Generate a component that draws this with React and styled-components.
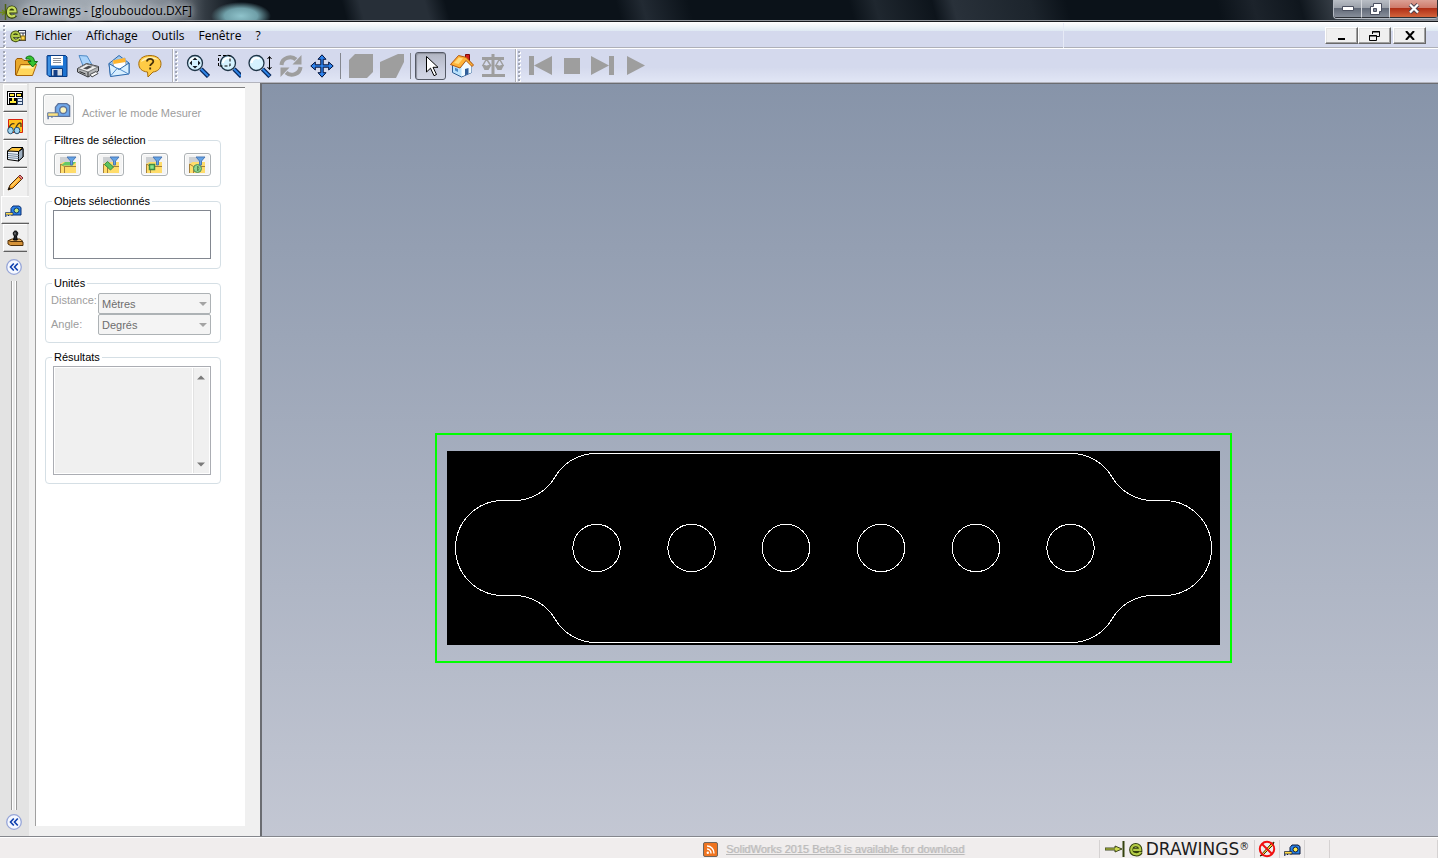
import React from "react";
import styled, { createGlobalStyle, css } from "styled-components";

const GlobalStyle = createGlobalStyle`
  * {
    box-sizing: border-box;
  }

  html,
  body,
  #root {
    height: 100%;
    margin: 0;
  }

  body {
    overflow: hidden;
  }

  button,
  select,
  textarea {
    font: inherit;
    color: inherit;
    margin: 0;
    padding: 0;
    border: none;
    background: none;
  }
`;

const Window = styled.div`
  height: 100vh;
  display: flex;
  flex-direction: column;
  background: #f0f0f0;
  font-family: "Open Sans", sans-serif;
  font-size: 12px;
  color: #000;
`;

/* ---------- title bar ---------- */

const TitleBar = styled.header`
  flex: none;
  height: 22px;
  display: flex;
  align-items: flex-start;
  justify-content: space-between;
  border-bottom: 1px solid #15181c;
  box-shadow: inset 0 -1px 0 #8e9298;
  background:
    radial-gradient(ellipse 30px 14px at 241px 16px, #8fc3cb 0%, #6f9fa8 55%, transparent 100%),
    linear-gradient(90deg, #737c84 0, #9ba3ac 40px, #a3abb4 110px, #7d858e 170px, #333b43 205px, transparent 240px),
    linear-gradient(
      75deg,
      #0b1219 0,
      #0b1219 335px,
      #272f38 352px,
      #272f38 415px,
      #0b1219 435px,
      #0b1219 600px,
      #222a33 625px,
      #0b1219 670px,
      #0b1219 825px,
      #1f272f 850px,
      #0d141b 905px,
      #29313a 925px,
      #1c242c 1000px,
      #0b1219 1035px,
      #0b1219 1180px,
      #1c232b 1215px,
      #0f161d 1260px,
      #4a525b 1310px,
      #7b848e 1335px,
      #7b848e 100%
    );
`;

const TitleText = styled.h1`
  display: flex;
  align-items: center;
  gap: 4px;
  height: 21px;
  margin: 0;
  font-size: 12px;
  line-height: 20px;
  font-weight: 400;
  text-shadow: 0 0 6px #e4e8ec, 0 0 8px #cfd5da;
`;

const CaptionButtons = styled.div`
  display: flex;
  height: 19px;
  border: 1px solid #b5bac2;
  border-top: none;
  border-right: none;
  border-radius: 0 0 4px 4px;
  overflow: hidden;
`;

const CaptionButton = styled.button`
  width: ${(p) => (p.$close ? 48 : 28)}px;
  height: 18px;
  display: flex;
  justify-content: center;
  align-items: center;
  border-right: 1px solid ${(p) => (p.$close ? "#2b2f35" : "#d4d7dc")};
  border-bottom: 1px solid #2b2f35;
  background: ${(p) =>
    p.$close
      ? "linear-gradient(#dca095 0, #cf7b6c 45%, #b02f17 50%, #d2643c 100%)"
      : "linear-gradient(#b9bec5 0, #9ba1aa 45%, #626a78 50%, #878e9a 100%)"};
`;

/* ---------- menu ---------- */

const MenuBar = styled.nav`
  flex: none;
  height: 27px;
  display: flex;
  align-items: center;
  padding: 1px 12px 0 2px;
  border-bottom: 1px solid #fff;
  box-shadow: inset 0 -1px 0 #aeb0b8;
  background: linear-gradient(#ffffff 0, #dfe9f3 9px, #d4d9ed 9px);
`;

const Grip = styled.span`
  width: 8px;
  height: ${(p) => p.$height}px;
  flex: none;
  background:
    radial-gradient(circle at 2px 2px, #a2a7b5 1px, transparent 1px) 0 0 / 8px 4px,
    radial-gradient(circle at 3px 3px, #fff 1px, transparent 1px) 0 0 / 8px 4px;
`;

const MenuItem = styled.button`
  padding: 0 7px;
  height: 22px;
  line-height: 20px;
`;

const MenuEnd = styled.span`
  width: 1px;
  height: 25px;
  margin-right: 261px;
  margin-left: auto;
  background: #e6eaf6;
`;

const MdiButton = styled.button`
  width: 33px;
  height: 17px;
  margin-left: ${(p) => (p.$spaced ? 2 : 0)}px;
  display: flex;
  align-items: center;
  justify-content: center;
  background: #f0f0f0;
  border: 1px solid #fff;
  border-right-color: #696969;
  border-bottom-color: #696969;
  box-shadow: inset -1px -1px 0 #a0a0a0, inset 1px 1px 0 #e3e3e3;
`;

/* ---------- toolbar ---------- */

const Toolbar = styled.div`
  flex: none;
  height: 34px;
  display: flex;
  padding-left: 2px;
  border-bottom: 1px solid #b3b4bd;
  background: linear-gradient(#d4d9ed 0, #d4d9ed 55%, #e1e6f5 100%);
`;

const ToolGroup = styled.div`
  display: flex;
  align-items: center;
  padding-right: 8px;
  ${(p) =>
    !p.$last &&
    css`
      border-right: 1px solid #fff;
      box-shadow: inset -1px 0 0 #aeb0b8;
    `}
`;

const ToolButton = styled.button`
  width: 31px;
  height: 28px;
  display: flex;
  align-items: center;
  justify-content: center;
  ${(p) =>
    p.$pressed &&
    css`
      border: 1px solid #555a66;
      border-radius: 3px;
      background: linear-gradient(#b1b5c2, #c9cddd 60%, #d3d7e6);
      box-shadow: inset 1px 1px 1px #8c909c;
    `}
`;

const Separator = styled.span`
  width: 1px;
  height: 26px;
  margin: 0 4px 0 3px;
  background: #84878f;
`;

/* ---------- body ---------- */

const Body = styled.div`
  flex: 1;
  min-height: 0;
  display: flex;
`;

const Rail = styled.div`
  flex: none;
  width: 29px;
  display: flex;
  flex-direction: column;
  padding: 1px 0 6px;
  background: #e3e3e3;
`;

const RailTab = styled.button`
  height: 28px;
  flex: none;
  margin-left: ${(p) => (p.$active ? 1 : 3)}px;
  margin-right: ${(p) => (p.$active ? 0 : 2)}px;
  padding-right: ${(p) => (p.$active ? 5 : 1)}px;
  display: flex;
  align-items: center;
  justify-content: center;
  background: #f0f0f0;
  border-left: 1px solid #fff;
  border-top: 1px solid #fff;
  border-bottom: 1px solid ${(p) => (p.$noLine ? "#f0f0f0" : "#5f5f5f")};
  box-shadow: inset 0 -1px 0 ${(p) => (p.$noLine ? "#f0f0f0" : "#c4c4c4")};
`;

const Collapse = styled.button`
  flex: none;
  width: 16px;
  height: 16px;
  margin: ${(p) => (p.$bottom ? 4 : 7)}px 0 0 6px;
  display: flex;
`;

const RailBars = styled.div`
  flex: 1;
  width: 6px;
  margin: 6px 0 0 11px;
  border: solid #9a9a9a;
  border-width: 0 1px;
  background: linear-gradient(90deg, #fff 1px, #e8e8e8 1px, #e8e8e8 3px, #fff 3px);
`;

const SidePanel = styled.aside`
  flex: none;
  width: 231px;
  padding: 4px 15px 10px 6px;
  background: #f0f0f0;
`;

const Sheet = styled.div`
  height: 100%;
  padding: 6px 24px 0 7px;
  background: #fff;
  border-left: 1px solid #a0a0a0;
  border-top: 1px solid #808080;
  font-family: "Liberation Sans", sans-serif;
  font-size: 11px;
`;

const MeasureRow = styled.label`
  display: flex;
  align-items: center;
  gap: 8px;
  height: 31px;
  margin-bottom: 8px;
  color: #9d9d9d;
  line-height: 14px;
  white-space: nowrap;

  span {
    padding-top: 7px;
  }
`;

const PushButton = styled.button`
  width: ${(p) => (p.$large ? 31 : 27)}px;
  height: ${(p) => (p.$large ? 31 : 23)}px;
  flex: none;
  display: flex;
  align-items: center;
  justify-content: center;
  border: 1px solid #adb2b5;
  border-radius: 3px;
  background: #f4f4f4;
  box-shadow: inset 0 0 0 1px #fcfcfc;
`;

const Group = styled.fieldset`
  min-width: 0;
  margin: 0 0 7px 2px;
  padding: ${(p) => p.$top}px 9px ${(p) => p.$bottom}px 7px;
  border: 1px solid #d5dfe5;
  border-radius: 4px;

  legend {
    margin-left: -1px;
    padding: 0 2px;
    height: 14px;
    line-height: 14px;
  }
`;

const FilterRow = styled.div`
  display: flex;
  justify-content: space-between;
  padding-left: 1px;
`;

const ObjectList = styled.textarea`
  display: block;
  width: 100%;
  height: 49px;
  resize: none;
  border: 1px solid #828790;
  background: #fff;
`;

const UnitRow = styled.div`
  display: flex;
  height: 21px;
  margin-left: -2px;

  label {
    width: 47px;
    line-height: 14px;
    padding-top: ${(p) => (p.$low ? 3 : 0)}px;
    color: #9d9d9d;
  }
`;

const SelectBox = styled.div`
  flex: 1;
  position: relative;

  select {
    width: 100%;
    height: 21px;
    padding-left: 3px;
    appearance: none;
    border: 1px solid #adb2b5;
    border-radius: 2px;
    background: #f4f4f4;
    color: #6d6d6d;
    opacity: 1;
  }

  svg {
    position: absolute;
    right: 4px;
    top: 9px;
    pointer-events: none;
  }
`;

const ResultBox = styled.div`
  display: flex;
  height: 109px;
  padding: 1px;
  border: 1px solid #abadb3;
  background: #fff;

  textarea {
    flex: 1;
    min-width: 0;
    resize: none;
    background: #f0f0f0;
  }
`;

const ScrollTrack = styled.div`
  width: 17px;
  padding: 7px 0 6px;
  display: flex;
  flex-direction: column;
  align-items: center;
  justify-content: space-between;
  background: #f0f0f0;
  border-left: 1px solid #fff;
  box-shadow: inset 1px 0 0 #e2e2e2;
`;

const Viewport = styled.main`
  flex: 1;
  min-width: 0;
  position: relative;
  overflow: hidden;
  border-left: 2px solid #6b6d72;
  border-top: 1px solid #6b6d72;
  background: linear-gradient(#8794a9, #c3c7d3);
`;

/* the model floats on the free canvas */
const Model = styled.svg`
  position: absolute;
  left: 173px;
  top: 349px;
`;

/* ---------- status bar ---------- */

const StatusBar = styled.footer`
  flex: none;
  height: 22px;
  display: flex;
  justify-content: flex-end;
  border-top: 1px solid #85878d;
  box-shadow: inset 0 1px 0 #fff;
  background: #f0eded;
`;

const StatusCell = styled.div`
  width: ${(p) => p.$width}px;
  margin-top: 3px;
  display: flex;
  align-items: center;
  justify-content: ${(p) => (p.$start ? "flex-start" : "center")};
  gap: ${(p) => (p.$start ? 8 : 3)}px;
  border-right: 1px solid #d5d2d2;
  font-family: "Liberation Sans", sans-serif;
  font-size: 11px;
`;

const NewsLink = styled.a`
  color: #b9b9b9;
  text-shadow: 1px 0 0 #d6d3d3;
  white-space: nowrap;
`;

const WordMark = styled.span`
  display: flex;
  font-family: "DejaVu Sans", sans-serif;
  font-size: 17px;
  line-height: 18px;
  color: #1c1c1c;

  sup {
    font-size: 10px;
    line-height: 14px;
  }
`;

/* ---------- icons ---------- */

const EMark = ({ size = 15 }) => (
  <svg width={size} height={size} viewBox="0 0 16 16" aria-hidden="true">
    <path
      d="M13.5 10.5C12 14 4 14.500 3.500 8.300 3.500 1.800 13 1.800 13 8.300H5.500"
      fill="none"
      stroke="#33400a"
      strokeWidth="4.600"
    />
    <path
      d="M13.500 10.500C12 14 4 14.500 3.500 8.300 3.500 1.800 13 1.800 13 8.300H5.500"
      fill="none"
      stroke="#b4cc48"
      strokeWidth="2.400"
    />
  </svg>
);

const AppIcon = () => (
  <svg width="18" height="20" viewBox="0 0 18 20" aria-hidden="true">
    <path d="M0 11.500H4M2 9l3 2.500-3 2.500" fill="none" stroke="#6f8a1b" strokeWidth="1.500" />
    <path d="M5.500 3v16" stroke="#4d6110" strokeWidth="1.500" />
    <path d="M15.500 14C13.500 16.500 8 16.500 8 11 8 5 15.500 5 15.500 10.500H9" fill="none" stroke="#2f3b08" strokeWidth="4" />
    <path d="M15 14C13.500 16 8 16.500 8 11 8 5 15.500 5 15.500 10.500H9" fill="none" stroke="#c6dc5c" strokeWidth="2.200" />
  </svg>
);

const DocIcon = () => (
  <svg width="18" height="14" viewBox="0 0 18 14" aria-hidden="true">
    <rect x="8.500" y="1.500" width="7" height="10" fill="#fff" stroke="#30364a" />
    <path d="M10 4h3v3M13 4h3" stroke="#30364a" fill="none" />
    <rect x="11" y="7" width="4" height="4" fill="#ffd94a" stroke="#8c6c10" />
    <path d="M9 9.500C7.500 12.500 2 12 2 7.200 2 2 9 2 9 7H3" fill="none" stroke="#37450d" strokeWidth="3.600" />
    <path d="M9 9.500C7.500 12.500 2 12 2 7.200 2 2 9 2 9 7H3" fill="none" stroke="#b4cc48" strokeWidth="1.800" />
  </svg>
);

const Tool = ({ children }) => (
  <svg width="24" height="24" viewBox="0 0 24 24" aria-hidden="true">
    {children}
  </svg>
);

const OpenIcon = () => (
  <Tool>
    <path d="M1.500 21V6.500L3 4.500h5l2 2h8.500V12" fill="#e9a92c" stroke="#9a5a08" />
    <path d="M2 21.500L6.500 10.500H22.500L18.500 21.500z" fill="#ffd65c" stroke="#a8660c" />
    <path d="M7.500 12H20l-1 2.500H6.500z" fill="#fff0a8" />
    <path d="M12 3.500C15.500.500 20 2 20.500 7.500H23.500L18.700 13 14 7.500h3C16.500 5.500 15 4.500 12 5z" fill="#35c431" stroke="#0d6d14" />
  </Tool>
);

const SaveIcon = () => (
  <Tool>
    <path d="M2.500 1.500h18l1.500 1.500v19.500h-18L2 20.500V2z" fill="#1e74d2" stroke="#0b3b82" />
    <path d="M6 2h12v9.500H6z" fill="#fff" />
    <path d="M8 4.500h8M8 6.500h8M8 8.500h8" stroke="#8a8f98" />
    <path d="M6.500 14.500h11V22h-11z" fill="#d6dbe3" stroke="#0b3b82" />
    <path d="M8.500 16h4v6h-4z" fill="#153f86" />
    <path d="M4 3v18" stroke="#61aef2" />
  </Tool>
);

const PrintIcon = () => (
  <Tool>
    <path d="M3 1.500l8 .500 4.500 8-8 3z" fill="#a9d3fb" stroke="#4f8bc6" />
    <path d="M1.500 14.500l9-5 12 3v4.500L12 23 1.500 18z" fill="#b4b6b8" stroke="#37393c" />
    <path d="M2 14.500l8.500-4.500 11.500 3-10 5z" fill="#ececec" stroke="#77797c" />
    <path d="M7 14.500l5.500-2.700 4 1-5.500 2.700z" fill="#4a4c4f" />
    <path d="M12 18v4.500M3.500 17.500l6 2.500" stroke="#2b2c2e" />
    <path d="M14 20.500l6-3 2 2-6 3.500z" fill="#fafafa" stroke="#4a4c4e" />
  </Tool>
);

const MailIcon = () => (
  <Tool>
    <path d="M2 9.500L12 1.500l10 7.500v10L3.500 22z" fill="#9fc8ee" stroke="#2b68ab" />
    <path d="M5.500 7L18 4l1.500 10-12 2z" fill="#fff" stroke="#a6a8ac" />
    <path d="M6 6.500L18 4l.600 4-12 2z" fill="#ffb42c" />
    <path d="M2 9.500l10 6 10-6.500v11L3.500 22.500z" fill="#d9efff" stroke="#2b68ab" />
    <path d="M3.500 22l7-8 11 6" fill="none" stroke="#4e8aca" />
  </Tool>
);

const HelpIcon = () => (
  <Tool>
    <path d="M12 1.500C19 1.500 23 5 23 9.800S19.500 17.500 15 18l-5 5-.500-5C4 17.500.800 14.500.800 9.800.800 5 5 1.500 12 1.500z" fill="#ffcb45" stroke="#a66d0c" />
    <path d="M3 8C4.500 2 17 1.500 20.500 6 14 4 8 5 3 8z" fill="#fff0b0" />
    <path d="M9 7.500c0-3.500 6.300-3.500 6.300 0 0 2.300-3.100 2.200-3.100 4.500M12.200 13.500v2" stroke="#46310a" strokeWidth="1.800" fill="none" />
  </Tool>
);

const Lens = ({ x = 9, y = 9 }) => (
  <>
    <path d={`M${x + 6} ${y + 6}l7.500 7.500`} stroke="#06275e" strokeWidth="4.500" />
    <path d={`M${x + 6} ${y + 6}l7 7`} stroke="#2f86e8" strokeWidth="1.800" />
    <circle cx={x} cy={y} r="7.500" fill="#d5f2ff" stroke="#1d3345" strokeWidth="1.300" />
    <path d={`M${x - 5} ${y}a5 5 0 0 1 8-4`} stroke="#fff" strokeWidth="2" fill="none" />
  </>
);

const ZoomFitIcon = () => (
  <Tool>
    <Lens />
    <path d="M9 3.500l2.500 2.500h-5zM9 14.500l2.500-2.500h-5zM3.500 9l2.500-2.500v5zM14.500 9l-2.500-2.500v5z" fill="#101820" />
  </Tool>
);

const ZoomAreaIcon = () => (
  <Tool>
    <Lens x={11} />
    <path d="M1.500 12V1.500H13V12z" fill="none" stroke="#000" strokeDasharray="3 2" />
  </Tool>
);

const ZoomIcon = () => (
  <Tool>
    <Lens x={8.5} />
    <path d="M21.500 3v12M19.500 5l2-2.500 2 2.500M19.500 13l2 2.500 2-2.500" fill="none" stroke="#000" />
  </Tool>
);

const RotateIcon = () => (
  <Tool>
    <path d="M2.500 11C3 4 12 1 17 5.500M21.500 13C21 20 12 23 7 18.500" fill="none" stroke="#9e9e9e" strokeWidth="4" />
    <path d="M22.500 1v9.500h-9zM1.500 23v-9.500h9z" fill="#9e9e9e" />
  </Tool>
);

const PanIcon = () => (
  <Tool>
    <path
      d="M12 .800l4 4.500H13.200v5.500h5.500V8l4.500 4-4.500 4v-2.800h-5.500v5.500h2.800L12 23.200l-4-4.500h2.800v-5.500H5.300V16L.800 12l4.500-4v2.800h5.500V5.300H8z"
      fill="#2f84ee"
      stroke="#03123c"
    />
  </Tool>
);

const CubeIcon = () => (
  <Tool>
    <path d="M6 0h18v18l-6 6H0V6z" fill="#9e9e9e" />
  </Tool>
);

const CutIcon = () => (
  <Tool>
    <path d="M18 0h6v8l-8 16H0V8z" fill="#9e9e9e" />
  </Tool>
);

const PointerIcon = () => (
  <Tool>
    <path d="M7.500 2.500v15.500l4-3.800 3.500 7.500 2.500-1.200-3.500-7.200h5z" fill="#fff" stroke="#000" />
  </Tool>
);

const HomeIcon = () => (
  <Tool>
    <path d="M15.500.500h4V10h-4z" fill="#d3201c" stroke="#7c0b08" />
    <path d="M2.500 10v8.500l9 4.500 10-4.500V9L14 4z" fill="#b9e0fa" stroke="#2b5c94" />
    <path d="M11.500 22.500V13l5-6 5 4v7.500z" fill="#f1faff" />
    <path d="M15 15l3.500-1v6L15 21.500z" fill="#315f9a" />
    <path d="M5 16.500l3 1.500v-3l-3-1.300z" fill="#4d89c6" />
    <path d="M.500 10.500L8.500 1.500l7.500 1.800L23.500 11l-1.500 1.500-6-6-6 7.500z" fill="#ffb338" stroke="#b3570c" />
    <path d="M4 9l5-5.500 4 1L8.500 10z" fill="#ffdd7e" />
  </Tool>
);

const ScalesIcon = () => (
  <Tool>
    <path d="M10.500 0h3v20h-3zM1 3h22v3H1zM1 20h23v3H1z" fill="#9e9e9e" />
    <path d="M5.500 5L1.500 12M5.500 5l4.500 7M18.500 5l-4 7M18.500 5l4 7" stroke="#9e9e9e" strokeWidth="1.500" />
    <path d="M1 11h9.500l-3 5h-4zM13.500 11H23l-2.500 5h-4z" fill="#9e9e9e" />
    <path d="M4.500 9.500h2v2h-2zM17.500 9.500h2v2h-2z" fill="#dadff0" />
  </Tool>
);

const PrevIcon = () => (
  <Tool>
    <path d="M0 2h5v19H0zM23 2v19L5 11.500z" fill="#9e9e9e" />
  </Tool>
);

const StopIcon = () => (
  <Tool>
    <path d="M4 4h16v16H4z" fill="#9e9e9e" />
  </Tool>
);

const NextIcon = () => (
  <Tool>
    <path d="M0 2l18 9.500L0 21zM18 2h5v19h-5z" fill="#9e9e9e" />
  </Tool>
);

const PlayIcon = () => (
  <Tool>
    <path d="M5 2l18 9.500L5 21z" fill="#9e9e9e" />
  </Tool>
);

const ChevronIcon = () => (
  <svg width="16" height="16" viewBox="0 0 16 16" aria-hidden="true">
    <circle cx="8" cy="8" r="7.300" fill="#f5f8ff" stroke="#97a6d8" strokeWidth="1.300" />
    <path d="M7.800 4.500L4.500 8l3.300 3.500M11.800 4.500L8.500 8l3.300 3.500" fill="none" stroke="#0d3fae" strokeWidth="1.600" />
  </svg>
);

const Small = ({ children }) => (
  <svg width="17" height="17" viewBox="0 0 17 17" aria-hidden="true">
    {children}
  </svg>
);

const LayoutIcon = () => (
  <Small>
    <g shapeRendering="crispEdges">
      <path d="M0 1h16v14H0z" fill="#000" />
      <path d="M1 2h14v12H1z" fill="#fff" />
      <path d="M2 3h6v4H2zM9 3h6v4H9zM2 8h8v6H2z" fill="#000" />
      <path d="M3 4h4v2H3zM10 4h4v2h-4zM5 8h2v3h2v2H3v-2h2z" fill="#ffe93c" />
      <path d="M10 8h6v7h-6z" fill="#2d4468" />
      <path d="M11 9h4v2h-4zM11 12h4v2h-4z" fill="#dfeaf8" />
    </g>
  </Small>
);

const GlassesIcon = () => (
  <Small>
    <path d="M1.500 1.500h14v13h-14z" fill="#ffc21e" stroke="#d6230f" />
    <path d="M2 11C2 8 5 4.500 7.500 6M8.500 11C9 8 12 3.500 14 5.500V9" fill="none" stroke="#4b3a14" strokeWidth="1.300" />
    <ellipse cx="3.500" cy="12.500" rx="2.800" ry="3.300" fill="#9dd3f0" stroke="#264f6e" />
    <ellipse cx="10" cy="12.500" rx="2.800" ry="3.300" fill="#9dd3f0" stroke="#264f6e" />
  </Small>
);

const LayersIcon = () => (
  <Small>
    <path d="M.500 5v8.500l11 1.500 4.500-4V2.500z" fill="#eef3f8" stroke="#000" />
    <path d="M11.500 5.500L16 2.500V11l-4.500 4z" fill="#9fb0c2" stroke="#000" />
    <path d="M.500 5L5 1.500h11L11.500 5.500z" fill="#ffc63a" stroke="#000" />
    <path d="M1 7.500l10.500 1M1 9.500l10.500 1M1 11.500l10.500 1" fill="none" stroke="#7288a0" />
  </Small>
);

const PencilIcon = () => (
  <Small>
    <path d="M1 16l2-5L12.500 1.500l3 3L6 14z" fill="#ffad2c" stroke="#4d2d0c" />
    <path d="M11.500 2.500L13 1l3 3-1.500 1.500z" fill="#ea8583" stroke="#7a2c2c" />
    <path d="M1 16l1-3 2 2z" fill="#111" />
    <path d="M4.500 12L12 4.500" stroke="#fff0a0" />
  </Small>
);

const TapeIcon = ({ body = "#2b83ea", line = "#0a2f70", dial = "#bfe884", size = 17, soft }) => (
  <svg width={size} height={size} viewBox="0 0 17 17" opacity={soft ? 0.65 : 1} aria-hidden="true">
    <path d="M6 13V6.500L8 4h6l2 1.500V13z" fill={body} stroke={line} />
    <circle cx="11.500" cy="8.500" r="2.500" fill={dial} stroke={line} />
    <path d="M.500 10.500h7.500v2.500H.500z" fill="#ffd945" stroke={line} strokeWidth=".7" />
    <path d="M.800 13v2M3.500 13v1" stroke={line} />
  </svg>
);

const StampIcon = () => (
  <Small>
    <path d="M1 10.500h11l4 1.500v3.500H3.500L1 14z" fill="#d59238" stroke="#50300a" />
    <path d="M1.500 10.500L5 9h8l3 2.500H4z" fill="#f0b866" stroke="#50300a" />
    <path d="M6.500 10l1-4C5.500 4.500 6 1 8.500 1S11.500 4.500 9.500 6l.700 4z" fill="#202326" stroke="#000" />
    <path d="M8 2.500v2" stroke="#aaa" />
  </Small>
);

const filterMarks = [
  <path key="m" d="M3 9.500L7 6h11l-3.500 3.500z" fill="#65c968" />,
  <path key="m" d="M3.500 8.500l3-3 6 5.500-3 3z" fill="#5cc45f" stroke="#3d8a45" />,
  <path key="m" d="M5.500 8.500h5v5h-5z" fill="#8be48a" stroke="#3d8a45" strokeWidth="1.500" />,
  <path key="m" d="M6.500 12.500a4 4 0 1 0 8 0 4 4 0 1 0-8 0M10.500 10a3 3 0 0 1 0 5z" fill="#8fd48f" stroke="#4c8f58" />,
];

const FilterIcon = ({ mark }) => (
  <svg width="20" height="18" viewBox="0 0 20 18" aria-hidden="true">
    <path d="M2 1h12v6H2z" fill="#cdd0d3" />
    <path d="M2 17V8l3.500-2H18v11z" fill="#ffdc6a" />
    <path d="M2.500 17V8M6.500 17v-6.500H18M2.500 8l4 2.500" fill="none" stroke="#a5803a" />
    {filterMarks[mark]}
    <path d="M9 1h9l-3.500 4v4h-2V5z" fill="#63a3e6" stroke="#4a78b5" />
  </svg>
);

const DownArrow = () => (
  <svg width="8" height="4" viewBox="0 0 8 4" aria-hidden="true">
    <path d="M0 0h8L4 4z" fill="#a4a4a4" />
  </svg>
);

const ScrollArrow = ({ up }) => (
  <svg width="8" height="5" viewBox="0 0 8 5" aria-hidden="true">
    <path d={up ? "M0 4.500h8L4 .500z" : "M0 .500h8L4 4.500z"} fill="#7a7a7a" />
  </svg>
);

const RssIcon = () => (
  <svg width="15" height="15" viewBox="0 0 15 15" aria-hidden="true">
    <rect x=".5" y=".5" width="14" height="14" rx="1.500" fill="#ef7420" stroke="#6f665e" />
    <path d="M4 7a4 4 0 0 1 4 4.500M4 4a7 7 0 0 1 7 7.500" fill="none" stroke="#fff" strokeWidth="1.400" />
    <circle cx="4.800" cy="10.700" r="1.200" fill="#fff" />
  </svg>
);

const ArrowMark = () => (
  <svg width="20" height="18" viewBox="0 0 20 18" aria-hidden="true">
    <path d="M0 8h10V6l7 3-7 3v-2H0z" fill="#cbd84e" stroke="#2e3810" strokeWidth=".9" />
    <path d="M18.500 1v16" stroke="#35420e" strokeWidth="2" />
  </svg>
);

const NoMarkupIcon = () => (
  <svg width="18" height="18" viewBox="0 0 18 18" aria-hidden="true">
    <path d="M2 16L13 4l3-2-1 3L5 15z" fill="#ffd23c" stroke="#3d2c08" />
    <circle cx="9" cy="9" r="7.200" fill="none" stroke="#f01010" strokeWidth="2" />
    <path d="M4 4l10 10" stroke="#f01010" strokeWidth="2" />
  </svg>
);

/* ---------- data ---------- */

const menus = ["Fichier", "Affichage", "Outils", "Fenêtre", "?"];

const fileTools = [
  ["Ouvrir", OpenIcon],
  ["Enregistrer", SaveIcon],
  ["Imprimer", PrintIcon],
  ["Envoyer", MailIcon],
  ["Aide", HelpIcon],
];

const zoomTools = [
  ["Zoom au mieux", ZoomFitIcon],
  ["Zoom fenêtre", ZoomAreaIcon],
  ["Zoom", ZoomIcon],
  ["Rotation", RotateIcon],
  ["Translation", PanIcon],
];

const playTools = [
  ["Précédent", PrevIcon],
  ["Stop", StopIcon],
  ["Suivant", NextIcon],
  ["Lecture", PlayIcon],
];

const holes = [161.5, 256.5, 351, 446, 541, 635.5];

const renderTools = (tools) =>
  tools.map(([label, Icon]) => (
    <ToolButton key={label} aria-label={label}>
      <Icon />
    </ToolButton>
  ));

const Unit = ({ id, label, value, low }) => (
  <UnitRow $low={low}>
    <label htmlFor={id}>{label}</label>
    <SelectBox>
      <select id={id} disabled>
        <option>{value}</option>
      </select>
      <DownArrow />
    </SelectBox>
  </UnitRow>
);

const App = () => {
  return (
    <Window>
      <GlobalStyle />
      <TitleBar>
        <TitleText>
          <AppIcon />
          eDrawings - [glouboudou.DXF]
        </TitleText>
        <CaptionButtons>
          <CaptionButton aria-label="Réduire">
            <svg width="12" height="5" viewBox="0 0 12 5">
              <path d="M.500.500h11v4H.500z" fill="#fff" stroke="#4b5060" />
            </svg>
          </CaptionButton>
          <CaptionButton aria-label="Restaurer">
            <svg width="12" height="12" viewBox="0 0 12 12">
              <path d="M3.500.500h8v8h-2v3h-9v-8h3z" fill="#fff" stroke="#4b5060" />
              <path d="M3.500 5.500h3v3h-3z" fill="#8a90a0" stroke="#4b5060" />
            </svg>
          </CaptionButton>
          <CaptionButton $close aria-label="Fermer">
            <svg width="12" height="11" viewBox="0 0 12 11">
              <path d="M2 1.500l8 8M10 1.500l-8 8" stroke="#4b4350" strokeWidth="4" />
              <path d="M2 1.500l8 8M10 1.500l-8 8" stroke="#fff" strokeWidth="2.300" />
            </svg>
          </CaptionButton>
        </CaptionButtons>
      </TitleBar>

      <MenuBar>
        <Grip $height={24} />
        <DocIcon />
        {menus.map((m) => (
          <MenuItem key={m}>{m}</MenuItem>
        ))}
        <MenuEnd />
        <MdiButton aria-label="Réduire le document">
          <svg width="8" height="9" viewBox="0 0 8 9">
            <path d="M0 7h7v2H0z" />
          </svg>
        </MdiButton>
        <MdiButton aria-label="Restaurer le document">
          <svg width="11" height="10" viewBox="0 0 11 10" fill="none" stroke="#000">
            <path d="M3.500 3V.500h7v5H8M3 1h8" />
            <path d="M.500 4.500h7v5h-7zM0 5h8" />
          </svg>
        </MdiButton>
        <MdiButton $spaced aria-label="Fermer le document">
          <svg width="10" height="9" viewBox="0 0 10 9">
            <path d="M1 0l8 9M9 0L1 9" stroke="#000" strokeWidth="2" />
          </svg>
        </MdiButton>
      </MenuBar>

      <Toolbar>
        <ToolGroup>
          <Grip $height={32} />
          {renderTools(fileTools)}
        </ToolGroup>
        <ToolGroup>
          <Grip $height={32} />
          {renderTools(zoomTools)}
          <Separator />
          <ToolButton aria-label="Ombré">
            <CubeIcon />
          </ToolButton>
          <ToolButton aria-label="Perspective">
            <CutIcon />
          </ToolButton>
          <Separator />
          <ToolButton $pressed aria-label="Sélectionner">
            <PointerIcon />
          </ToolButton>
          <ToolButton aria-label="Origine">
            <HomeIcon />
          </ToolButton>
          <ToolButton aria-label="Propriétés de masse">
            <ScalesIcon />
          </ToolButton>
        </ToolGroup>
        <ToolGroup $last>
          <Grip $height={32} />
          {renderTools(playTools)}
        </ToolGroup>
      </Toolbar>

      <Body>
        <Rail>
          <RailTab aria-label="Feuilles">
            <LayoutIcon />
          </RailTab>
          <RailTab aria-label="Vues">
            <GlassesIcon />
          </RailTab>
          <RailTab aria-label="Calques">
            <LayersIcon />
          </RailTab>
          <RailTab $noLine aria-label="Annotations">
            <PencilIcon />
          </RailTab>
          <RailTab $active aria-label="Mesurer">
            <TapeIcon />
          </RailTab>
          <RailTab aria-label="Tampons">
            <StampIcon />
          </RailTab>
          <Collapse aria-label="Replier">
            <ChevronIcon />
          </Collapse>
          <RailBars />
          <Collapse $bottom aria-label="Replier le bas">
            <ChevronIcon />
          </Collapse>
        </Rail>

        <SidePanel>
          <Sheet>
            <MeasureRow htmlFor="measure">
              <PushButton $large id="measure" aria-label="Mesurer">
                <TapeIcon size={24} dial="#fff3a0" soft />
              </PushButton>
              <span>Activer le mode Mesurer</span>
            </MeasureRow>

            <Group $top={6} $bottom={10}>
              <legend>Filtres de sélection</legend>
              <FilterRow>
                {["Arête", "Face", "Sommet", "Cercle"].map((label, i) => (
                  <PushButton key={label} aria-label={label}>
                    <FilterIcon mark={i} />
                  </PushButton>
                ))}
              </FilterRow>
            </Group>

            <Group $top={2} $bottom={9}>
              <legend>Objets sélectionnés</legend>
              <ObjectList aria-label="Objets sélectionnés" readOnly />
            </Group>

            <Group $top={3} $bottom={7}>
              <legend>Unités</legend>
              <Unit id="distance" label="Distance:" value="Mètres" />
              <Unit id="angle" label="Angle:" value="Degrés" low />
            </Group>

            <Group $top={2} $bottom={8}>
              <legend>Résultats</legend>
              <ResultBox>
                <textarea aria-label="Résultats" disabled />
                <ScrollTrack>
                  <ScrollArrow up />
                  <ScrollArrow />
                </ScrollTrack>
              </ResultBox>
            </Group>
          </Sheet>
        </SidePanel>

        <Viewport>
          <Model width="797" height="230" viewBox="0 0 797 230" shapeRendering="crispEdges">
            <rect x="1" y="1" width="795" height="228" fill="none" stroke="#00ff00" strokeWidth="2" />
            <rect x="12" y="18" width="773" height="194" fill="#000" />
            <g fill="none" stroke="#fff">
              <path d="M68 67.500H80A47 47 0 0 0 120 44 47 47 0 0 1 160 20.500H637A47 47 0 0 1 677 44 47 47 0 0 0 717 67.500H729A47.500 47.500 0 0 1 729 162.500H717A47 47 0 0 0 677 186 47 47 0 0 1 637 209.500H160A47 47 0 0 1 120 186 47 47 0 0 0 80 162.500H68A47.500 47.500 0 0 1 68 67.500z" />
              {holes.map((cx) => (
                <circle key={cx} cx={cx} cy="115" r="23.700" />
              ))}
            </g>
          </Model>
        </Viewport>
      </Body>

      <StatusBar>
        <StatusCell $width={397} $start>
          <RssIcon />
          <NewsLink href="#news">SolidWorks 2015 Beta3 is available for download</NewsLink>
        </StatusCell>
        <StatusCell $width={155}>
          <ArrowMark />
          <EMark />
          <WordMark>
            DRAWINGS<sup>®</sup>
          </WordMark>
        </StatusCell>
        <StatusCell $width={25}>
          <NoMarkupIcon />
        </StatusCell>
        <StatusCell $width={25}>
          <TapeIcon line="#06163a" dial="#ffe94a" />
        </StatusCell>
        <StatusCell $width={25} />
        <StatusCell $width={108} />
      </StatusBar>
    </Window>
  );
};

export default App;
